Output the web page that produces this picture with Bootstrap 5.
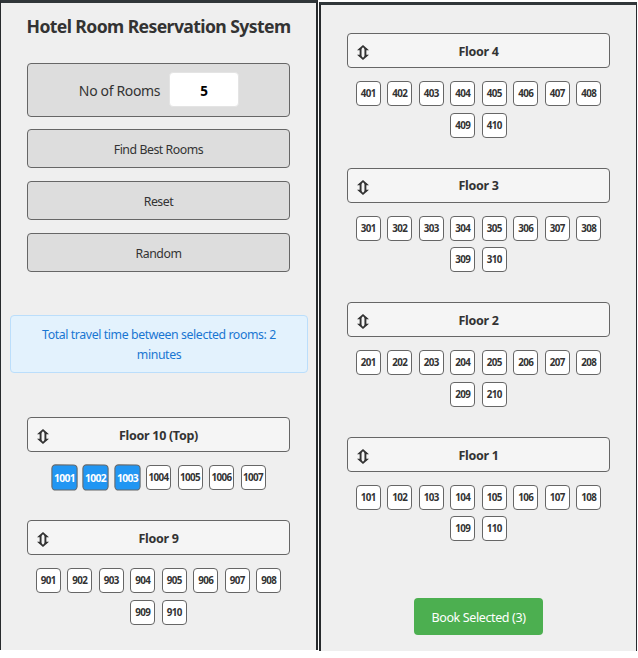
<!DOCTYPE html>
<html lang="en">
<head>
<meta charset="utf-8">
<meta name="viewport" content="width=device-width, initial-scale=1">
<title>Hotel Room Reservation System</title>
<link href="https://cdn.jsdelivr.net/npm/bootstrap@5.3.0/dist/css/bootstrap.min.css" rel="stylesheet">
<style>
body { font-family: "Noto Sans", "Open Sans", sans-serif; font-size: 13px; color: #333; background: #fff; overflow: hidden; }
.pane { background: #efefef; border: solid #272a2d; }
.pane-left { width: 318px; height: 650px; border-width: 3px 2px 0 1px; border-top-color: #303639; padding: 0 26px 0 26px; }
.pane-right { width: 318px; height: 649px; margin: 2px 0 0 1px; border-width: 3px 1px 0 2px; border-top-color: #303639; padding: 28px 26px 0; }
.title { font-size: 17.6px; font-weight: 700; line-height: 24px; margin: 11px -10px 25px; letter-spacing: -.6px; }
.ctl { background: #ddd; border: 1px solid #666; border-radius: 4px; height: 39px; margin-bottom: 13px; color: #333; font-size: 12.3px; width: 263px; padding: 4px 0 0; letter-spacing: -.45px; }
.ctl-count { height: 54px; margin-bottom: 12px; font-size: 14px; gap: 9px; padding: 0 0 0 1px; letter-spacing: -.35px; }
.ctl-count input { width: 70px; height: 35px; border: 1px solid #e4e4e4; border-radius: 4px; font-weight: 700; font-size: 13.5px; color: #000; padding: 3px 0 0; margin: -1px 0 0 0; }
.travel { background: #e3f2fd; border: 1px solid #bbdefb; border-radius: 4px; color: #1976d2; font-size: 12.3px; line-height: 20px; height: 58px; margin: 43px -18px 44px -17px; padding: 9px 20px; letter-spacing: -.4px; }
.floor { height: 103px; }
.floor-tall { height: 134.6px; }
.floor-name { position: relative; height: 35.3px; width: 263px; background: #f5f5f5; border: 1px solid #666; border-radius: 4px; font-weight: 700; font-size: 12.5px; padding-top: 3px; letter-spacing: -.3px; }
.lift { position: absolute; left: 9px; top: 11px; }
.rooms { gap: 6.5px; margin-top: 12.8px; width: 263px; }
.room { width: 25px; height: 25px; padding: 0; border: 1px solid #666; border-radius: 4px; background: #fff; color: #333; font-size: 9.8px; font-weight: 700; line-height: 23px; text-align: center; letter-spacing: -.55px; }
.picked { background: #2196f3; color: #fff; transform: scale(1.05); line-height: 25px; }
.book { background: #4caf50; color: #fff; border: 0; border-radius: 4px; width: 129px; height: 37px; font-size: 12.5px; padding: 3px 0 0; margin-top: 27px; letter-spacing: -.38px; }
</style>
</head>
<body>
<svg width="0" height="0" class="d-block">
  <symbol id="updown" viewBox="0 0 12 15">
    <path d="M3.6 3v9M8.4 3v9" fill="none" stroke="#333" stroke-width="1.9"/>
    <path d="M6 0 12 5.2H8.9L6 2.2 3.1 5.2H0ZM6 15 12 9.8H8.9L6 12.8 3.1 9.8H0Z" fill="#333"/>
  </symbol>
</svg>
<div class="d-flex align-items-start">
  <main class="pane pane-left flex-shrink-0">
    <h1 class="title text-center text-nowrap">Hotel Room Reservation System</h1>
    <div class="ctl ctl-count d-flex align-items-center justify-content-center">
      <label for="count">No of Rooms</label>
      <input id="count" type="text" class="text-center" value="5">
    </div>
    <button class="ctl d-block">Find Best Rooms</button>
    <button class="ctl d-block">Reset</button>
    <button class="ctl d-block">Random</button>
    <div class="travel text-center">Total travel time between selected rooms: 2<br>minutes</div>
    <section class="floor">
      <div class="floor-name d-flex align-items-center justify-content-center"><svg class="lift" width="12" height="15"><use href="#updown"/></svg>Floor 10 (Top)</div>
      <div class="rooms d-flex flex-wrap justify-content-center"><div class="room picked">1001</div><div class="room picked">1002</div><div class="room picked">1003</div><div class="room">1004</div><div class="room">1005</div><div class="room">1006</div><div class="room">1007</div></div>
    </section>
    <section class="floor">
      <div class="floor-name d-flex align-items-center justify-content-center"><svg class="lift" width="12" height="15"><use href="#updown"/></svg>Floor 9</div>
      <div class="rooms d-flex flex-wrap justify-content-center"><div class="room">901</div><div class="room">902</div><div class="room">903</div><div class="room">904</div><div class="room">905</div><div class="room">906</div><div class="room">907</div><div class="room">908</div><div class="room">909</div><div class="room">910</div></div>
    </section>
  </main>
  <aside class="pane pane-right flex-shrink-0">
    <section class="floor-tall">
      <div class="floor-name d-flex align-items-center justify-content-center"><svg class="lift" width="12" height="15"><use href="#updown"/></svg>Floor 4</div>
      <div class="rooms d-flex flex-wrap justify-content-center"><div class="room">401</div><div class="room">402</div><div class="room">403</div><div class="room">404</div><div class="room">405</div><div class="room">406</div><div class="room">407</div><div class="room">408</div><div class="room">409</div><div class="room">410</div></div>
    </section>
    <section class="floor-tall">
      <div class="floor-name d-flex align-items-center justify-content-center"><svg class="lift" width="12" height="15"><use href="#updown"/></svg>Floor 3</div>
      <div class="rooms d-flex flex-wrap justify-content-center"><div class="room">301</div><div class="room">302</div><div class="room">303</div><div class="room">304</div><div class="room">305</div><div class="room">306</div><div class="room">307</div><div class="room">308</div><div class="room">309</div><div class="room">310</div></div>
    </section>
    <section class="floor-tall">
      <div class="floor-name d-flex align-items-center justify-content-center"><svg class="lift" width="12" height="15"><use href="#updown"/></svg>Floor 2</div>
      <div class="rooms d-flex flex-wrap justify-content-center"><div class="room">201</div><div class="room">202</div><div class="room">203</div><div class="room">204</div><div class="room">205</div><div class="room">206</div><div class="room">207</div><div class="room">208</div><div class="room">209</div><div class="room">210</div></div>
    </section>
    <section class="floor-tall">
      <div class="floor-name d-flex align-items-center justify-content-center"><svg class="lift" width="12" height="15"><use href="#updown"/></svg>Floor 1</div>
      <div class="rooms d-flex flex-wrap justify-content-center"><div class="room">101</div><div class="room">102</div><div class="room">103</div><div class="room">104</div><div class="room">105</div><div class="room">106</div><div class="room">107</div><div class="room">108</div><div class="room">109</div><div class="room">110</div></div>
    </section>
    <button class="book d-block mx-auto">Book Selected (3)</button>
  </aside>
</div>
<script src="https://cdn.jsdelivr.net/npm/bootstrap@5.3.0/dist/js/bootstrap.bundle.min.js"></script>
</body>
</html>
